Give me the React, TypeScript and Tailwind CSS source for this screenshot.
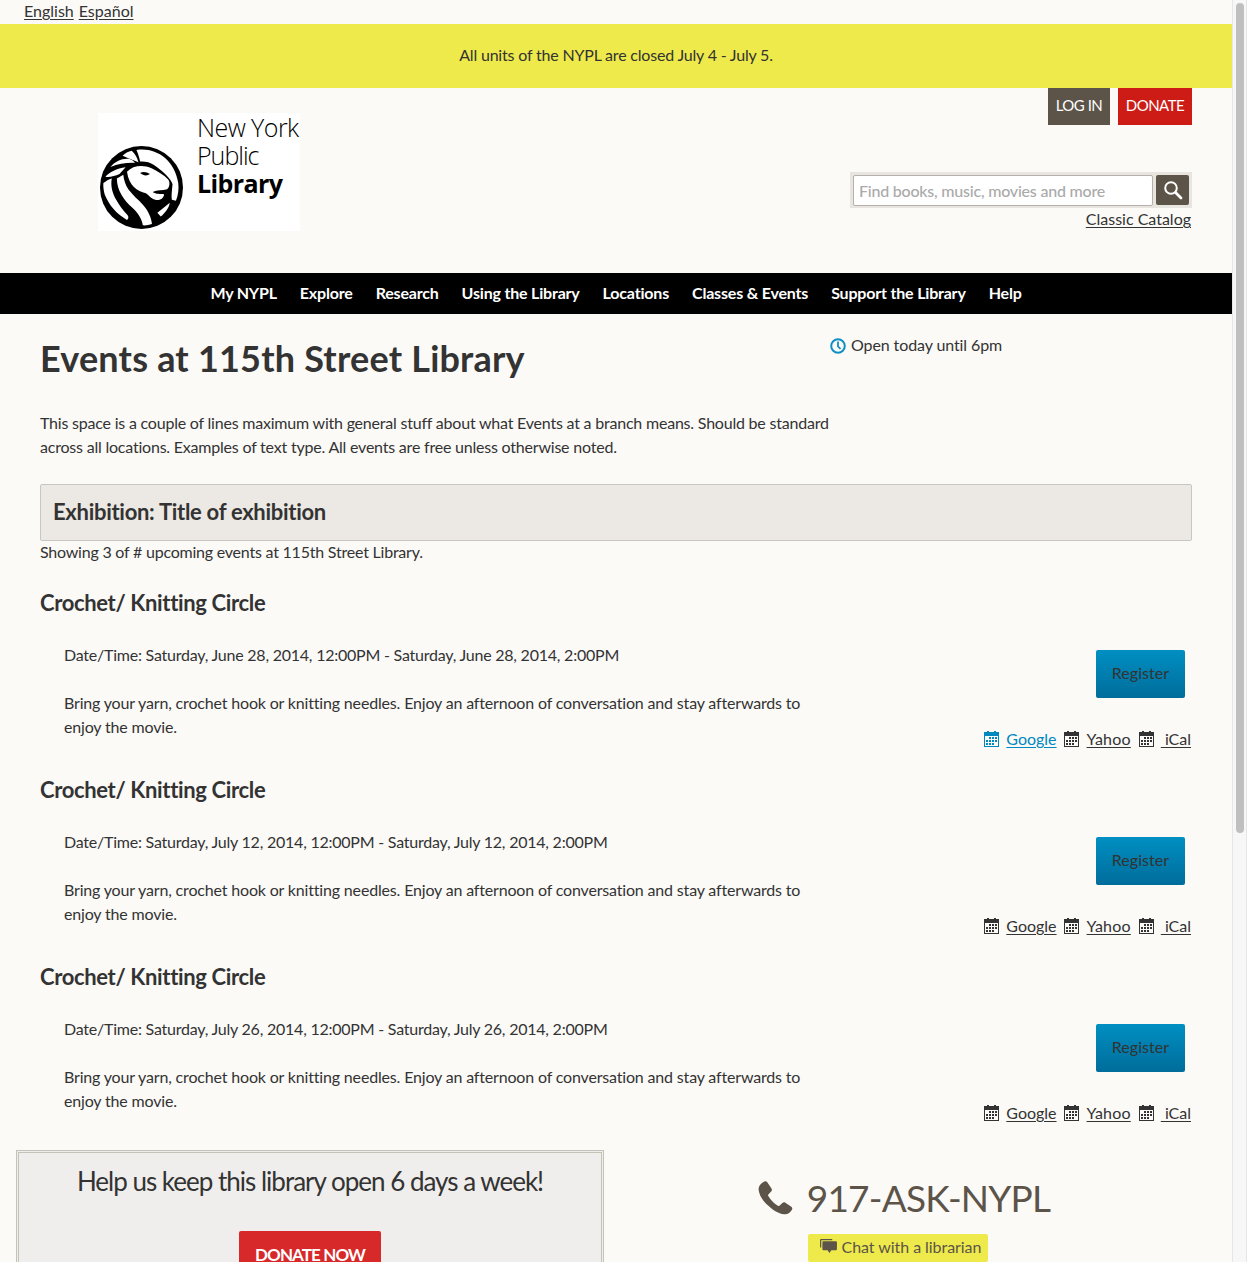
const font = '[font-family:Lato,"Noto_Sans",sans-serif]';

function Calendar({ className }: { className: string }) {
  return (
    <svg viewBox="0 0 15 16" className={`w-[15px] h-[16px] shrink-0 ${className}`} fill="currentColor">
      <path fillRule="evenodd" d="M3 0h2v1h5V0h2v1h3v15H0V1h3V0zM1 5v10h13V5H1z" />
      <path d="M5 6h2v2H5zM8 6h2v2H8zM11 6h2v2h-2zM2 9h2v2H2zM5 9h2v2H5zM8 9h2v2H8zM11 9h2v2h-2zM2 12h2v2H2zM5 12h2v2H5zM8 12h2v2H8z" />
    </svg>
  );
}

function LionLogo() {
  return (
    <svg viewBox="12 12 246 246" className="w-[83px] h-[83px] shrink-0">
      <circle cx="135" cy="135" r="123" fill="#000" />
      <g fill="#fff">
        <path d="M120 24C175 15 232 50 244 122C246 140 244 158 237 174L225 171C223 160 225 145 227 125C222 108 200 88 172 68C160 60 146 57 131 58C128 45 125 35 120 24Z" />
        <path d="M92 88c18-19 48-21 73-10 19 9 37 21 49 33 6 8 5 22-3 29-13 4-30 2-43 8 10 8 23 4 34 7-1 13-12 18-24 17-12-2-19-12-30-20C122 145 98 130 92 88z" />
        <path d="M79 41c7-8 17-13 27-15 10 9 17 22 20 34-14-6-31-11-47-19z" />
        <path d="M43 74c13-16 34-26 55-24 7 2 13 6 18 12-25-1-50 3-73 12z" />
        <path d="M28 103c12-13 34-25 60-28-7 7-12 13-18 20-14 6-29 10-42 8z" />
        <path d="M22 122c8-7 16-11 25-14-4 20 1 43 13 63 9 16 20 31 34 46 4 6 2 11-2 14-30-16-54-44-66-75-3-11-5-23-4-34z" />
        <path d="M62 108c6-3 12-7 19-11 2 17 7 32 16 45 13 17 29 30 44 46 13 15 23 35 25 55-9 3-19 5-27 4-3-20-16-38-31-52-24-22-46-50-46-87z" />
        <path d="M182 210l37-30c-3 16-14 30-27 41l-10-11z" />
      </g>
      <path d="M131 92c8-5 20-3 29 3-8 6-19 6-29-3z" fill="#000" />
    </svg>
  );
}

function EventItem({ date, active }: { date: string; active?: boolean }) {
  return (
    <section className="flex flex-col">
      <h2 className="text-[22px] leading-[26px] font-bold text-[#333] tracking-[-0.35px] mt-[26px]">Crochet/ Knitting Circle</h2>
      <div className="flex justify-between mt-[27px] pl-6 h-[108px]">
        <div className="w-[760px]">
          <p className="leading-6 tracking-[-0.23px]">Date/Time: {date}</p>
          <p className="leading-6 mt-6 tracking-[-0.17px]">
            Bring your yarn, crochet hook or knitting needles. Enjoy an afternoon of conversation and stay afterwards to enjoy the movie.
          </p>
        </div>
        <div className="flex flex-col items-end">
          <button className="w-[89px] h-12 mt-[7px] mr-[7px] pb-[2px] rounded-[2px] bg-gradient-to-b from-[#008fc2] to-[#006d9b] text-[#333] tracking-[0.05px]">Register</button>
          <div className="flex items-center mt-[29px] h-6 mr-[1px]">
            <span className={`flex items-center ${active ? "text-[#0088bf]" : ""}`}>
              <Calendar className="mr-[7px]" />
              <a className="underline underline-offset-2">Google</a>
            </span>
            <Calendar className="ml-[7px] mr-2" />
            <a className="underline underline-offset-2 tracking-[0.2px]">Yahoo</a>
            <Calendar className="ml-2 mr-[7px]" />
            <a className="underline underline-offset-2 whitespace-pre"> iCal</a>
          </div>
        </div>
      </div>
    </section>
  );
}

export default function App() {
  const nav = ["My NYPL", "Explore", "Research", "Using the Library", "Locations", "Classes & Events", "Support the Library", "Help"];
  return (
    <div className={`flex h-[1262px] overflow-hidden bg-[#fbfaf7] text-[16px] text-[#333] ${font}`}>
      <main className="flex-1 min-w-0">
        <div className="h-6 pl-6 leading-[21px] text-[#333] flex gap-[5px]">
          <a className="underline underline-offset-2">English</a>
          <a className="underline underline-offset-2">Español</a>
        </div>
        <div className="h-16 bg-[#eeea4b] flex items-center justify-center tracking-[-0.19px] pb-[3px]">All units of the NYPL are closed July 4 - July 5.</div>

        <header className="h-[185px] flex justify-between pl-[98px] pr-10">
          <div className="mt-[25px] w-[202px] h-[118px] bg-white flex items-end pb-[2px] pl-[2px]">
            <LionLogo />
            <div className="self-start ml-[14px] text-black text-[25px] leading-[28px] [font-family:'Open_Sans',sans-serif] font-light whitespace-nowrap">
              <div className="tracking-[-0.55px]">New York</div>
              <div className="tracking-[-1px]">Public</div>
              <div className="font-bold tracking-[-0.6px]">Library</div>
            </div>
          </div>
          <div className="flex flex-col items-end">
            <div className="flex gap-2">
              <a className="h-[37px] w-[62px] pb-[3px] flex items-center justify-center bg-[#5c5449] text-white tracking-[-0.5px] text-[15px]">LOG IN</a>
              <a className="h-[37px] w-[74px] pb-[3px] flex items-center justify-center bg-[#cd1c16] text-white tracking-[-0.5px] text-[15px]">DONATE</a>
            </div>
            <div className="mt-[47px] w-[342px] h-9 bg-[#e8e4df] flex items-center pl-[3px] pr-[3px] gap-[3px]">
              <div className="w-[300px] h-[31px] bg-white border border-[#b5b0aa] rounded-[2px] flex items-center pl-[5px] pt-[1px] text-[#aaa] font-medium tracking-[-0.22px] whitespace-nowrap">Find books, music, movies and more</div>
              <div className="w-[33px] h-[30px] bg-[#5c5449] rounded-[2px] flex items-center justify-center">
                <svg viewBox="0 0 20 20" className="w-[20px] h-[20px]" fill="none" stroke="#fff">
                  <circle cx="8" cy="8" r="5.8" strokeWidth="2" />
                  <path d="M12.5 12.5L18 18" strokeWidth="2.8" strokeLinecap="round" />
                </svg>
              </div>
            </div>
            <a className="underline underline-offset-2 leading-[22px] mr-[1px]">Classic Catalog</a>
          </div>
        </header>

        <nav className="h-[41px] bg-black flex items-center justify-center gap-[23px] font-bold text-white tracking-[-0.19px] pb-[2px]">
          {nav.map((n) => (
            <a key={n}>{n}</a>
          ))}
        </nav>

        <div className="pl-10 pr-10">
          <div className="flex">
            <h1 className="text-[36px] leading-[44px] font-bold text-[#333] tracking-[0.2px] mt-[22px] w-[790px]">Events at 115th Street Library</h1>
            <div className="flex items-center h-6 mt-[19px] tracking-[-0.1px]">
              <svg viewBox="0 0 16 16" className="w-4 h-4 mr-[5px] mt-[2px]" fill="none" stroke="#0f8fc4" strokeWidth="2">
                <circle cx="8" cy="8" r="6.8" />
                <path d="M8 3.5V8.4l2.5 2.6" strokeWidth="1.8" />
              </svg>
              Open today until 6pm
            </div>
          </div>
          <p className="leading-6 mt-[31px] w-[800px] tracking-[-0.21px]">
            This space is a couple of lines maximum with general stuff about what Events at a branch means. Should be standard across all locations. Examples of text type. All events are free unless otherwise noted.
          </p>
          <div className="mt-[25px] h-[57px] bg-[#ece8e4] border border-[#c9c5c0] rounded-[2px] flex items-center pl-3 pb-[2px] text-[22px] font-bold text-[#333] tracking-[-0.29px]">Exhibition: Title of exhibition</div>
          <p className="leading-6 -mt-px tracking-[-0.22px]">Showing 3 of # upcoming events at 115th Street Library.</p>
          <EventItem active date="Saturday, June 28, 2014, 12:00PM - Saturday, June 28, 2014, 2:00PM" />
          <EventItem date="Saturday, July 12, 2014, 12:00PM - Saturday, July 12, 2014, 2:00PM" />
          <EventItem date="Saturday, July 26, 2014, 12:00PM - Saturday, July 26, 2014, 2:00PM" />
        </div>

        <div className="flex mt-[25px] pl-4">
          <div className="w-[588px] h-[150px] bg-[#f0eeec] border-[3px] border-double border-[#c3c3b8] flex flex-col items-center shrink-0">
            <h3 className="text-[26px] leading-[32px] mt-[12px] text-[#333] tracking-[-1px] whitespace-nowrap">Help us keep this library open 6 days a week!</h3>
            <a className="mt-[34px] w-[142px] h-12 bg-[#d7282a] rounded-[2px] text-white font-bold text-center pt-[11px] tracking-[-0.9px] text-[17px]">DONATE NOW</a>
          </div>
          <div className="flex-1 flex flex-col items-center pr-[29px]">
            <div className="flex items-center mt-[25px] text-[#5c5449]">
              <svg viewBox="0 0 34 34" className="w-[36px] h-[36px] mr-[14px]" fill="#5c5449">
                <path d="M7 1.5c1-.6 2-.3 2.7.6l4 6c.6 1 .5 2-.3 2.8l-2.5 2.5c-.5.5-.6 1.2-.2 1.8 1.2 2 2.500 3.600 4 5.200 1.500 1.500 3 2.800 5 4 .6.4 1.300.3 1.800-.2l2.400-2.500c.8-.8 1.900-1 2.900-.3l5.600 3.800c1 .7 1.200 1.800.6 2.800-1.500 2.600-4 4.600-7.200 4.300-6-.6-11.300-4.300-15.300-8.300C5.500 19.900 2 14.500 1.500 9 1.200 5.500 4 3 7 1.500z" />
              </svg>
              <span className="text-[37px] leading-[46px] tracking-[-0.8px]">917-ASK-NYPL</span>
            </div>
            <a className="mt-[13px] mr-[12px] w-[180px] h-7 pb-[2px] bg-[#eeea4b] rounded-[2px] flex items-center pl-3 text-[#5c5449] tracking-[-0.05px]">
              <svg viewBox="0 0 18 16" className="w-[17px] h-[15px] mr-[5px] -mt-[2px]" fill="#5c5449">
                <path d="M1 0h12v1.300H1.300V9H0V1C0 .4.400 0 1 0z" />
                <path d="M3.500 2.500H17c.6 0 1 .4 1 1V11c0 .6-.4 1-1 1h-5l-2 3-2-3H3.500c-.6 0-1-.4-1-1V3.500c0-.6.4-1 1-1z" />
              </svg>
              Chat with a librarian
            </a>
          </div>
        </div>
      </main>
      <aside className="w-[15px] shrink-0 bg-[#f7f7f7] border-x border-[#e6e6e6] flex justify-center">
        <div className="w-2 h-[830px] mt-[3px] bg-[#bfbfbf] rounded-full" />
      </aside>
    </div>
  );
}
